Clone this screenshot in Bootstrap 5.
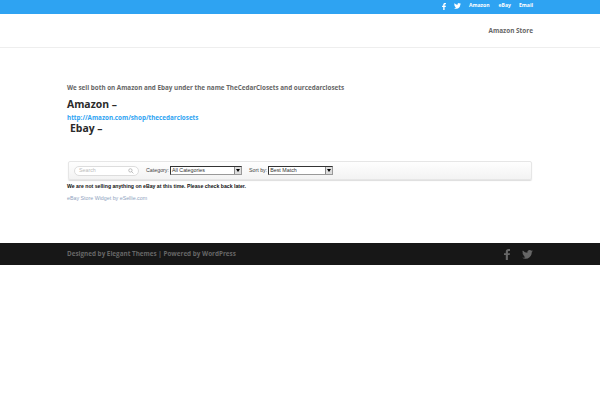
<!DOCTYPE html>
<html lang="en">
<head>
<meta charset="utf-8">
<title>Amazon Store</title>
<link rel="stylesheet" href="https://cdn.jsdelivr.net/npm/bootstrap@5.3.0/dist/css/bootstrap.min.css">
<style>
html,body{height:400px;overflow:hidden;}
body{font-family:"Open Sans",sans-serif;background:#fff;color:#666;}
.wrap-main{width:466px;margin-left:67px;}
.top-strip{height:14px;background:#2ea3f2;}
.top-strip a,.site-head a{text-decoration:none;font-weight:700;}
.top-links{font-size:5.1px;gap:8px;height:12px;}
.top-links a{color:#fff;}
.top-links .amz-link{margin-right:1px;}
.site-head{height:34px;border-bottom:1px solid #eee;font-size:6.4px;padding-top:12px;}
.site-head a{color:#666;line-height:9px;}
.intro{font-size:6.3px;font-weight:700;line-height:9px;margin:35px 0 0;color:#666;}
.shop-title{font-size:10.4px;font-weight:700;color:#2a2a2a;line-height:13px;margin:0;}
.title-one{margin-top:6px;}
.store-link{display:block;font-size:6.3px;font-weight:700;color:#2ea3f2;line-height:8px;margin-top:3px;text-decoration:none;}
.title-two{padding-left:3px;line-height:12px;margin-top:0;}
.ebay-bar{height:19px;margin:27px 1px 0 1px;background:linear-gradient(#fefefe,#f3f3f3);border:1px solid #e6e6e6;border-radius:2px;box-shadow:0 1px 1px #ddd;padding-left:5px;font-family:"Liberation Sans",sans-serif;font-size:5.3px;color:#444;}
.search-pill{width:65px;height:10px;border:1px solid #ddd;border-radius:5px;background:#fff;color:#bbb;padding:0 4px;margin-right:7px;}
.fake-select{height:9px;border:1px solid #333;border-right-color:#999;border-bottom-color:#999;background:#fff;color:#333;padding-left:1px;margin-left:1px;line-height:7px;position:relative;}
.fake-select.cat{width:72px;margin-right:7px;}
.fake-select.sort{width:65px;}
.sel-arrow{position:absolute;right:0;top:0;width:7px;height:7px;background:#ddd;border-left:1px solid #888;}
.sel-arrow::after{content:"";position:absolute;left:1px;top:2px;border:2px solid transparent;border-top:3px solid #000;border-bottom:0;}
.notice{font-family:"Liberation Sans",sans-serif;font-size:5.17px;font-weight:700;color:#111;line-height:7px;margin:3px 0 0;}
.credit{font-family:"Liberation Sans",sans-serif;font-size:5.3px;color:#8fa3c0;line-height:7px;margin:5px 0 0;}
.foot-strip{height:22px;margin-top:41px;background:#171717;}
.foot-strip span{font-size:6.33px;font-weight:700;color:#666;}
.foot-icons{gap:12px;}
.foot-icons svg{display:block;}
</style>
</head>
<body>
<div class="top-strip">
  <div class="wrap-main d-flex justify-content-end align-items-center top-links">
    <a href="#" aria-label="Facebook"><svg width="4" height="7" viewBox="0 0 10 18" class="d-block"><path fill="#fff" d="M3 18V10H0V7h3V4.500C3 1.500 4.800 0 7.400 0H10v3H8.300C7 3 6.500 3.600 6.500 4.700V7H10l-.5 3h-3v8z"/></svg></a>
    <a href="#" aria-label="Twitter"><svg width="7" height="6" viewBox="0 0 24 20" class="d-block"><path fill="#fff" d="M24 2.400c-.9.400-1.800.7-2.800.8 1-.6 1.800-1.600 2.200-2.700-1 .6-2 1-3.100 1.200A4.900 4.900 0 0 0 11.900 6.200 14 14 0 0 1 1.700.9a4.900 4.900 0 0 0 1.500 6.600c-.8 0-1.600-.2-2.200-.6 0 2.400 1.700 4.400 3.900 4.900-.7.200-1.500.2-2.200.1.600 2 2.400 3.400 4.600 3.400A9.900 9.900 0 0 1 0 17.300 14 14 0 0 0 7.500 19.500c9.100 0 14.300-7.700 14-14.600 1-.7 1.800-1.600 2.500-2.500z"/></svg></a>
    <a href="#" class="amz-link">Amazon</a>
    <a href="#">eBay</a>
    <a href="#">Email</a>
  </div>
</div>
<header class="site-head">
  <div class="wrap-main d-flex justify-content-end"><a href="#">Amazon Store</a></div>
</header>
<main class="wrap-main">
  <p class="intro">We sell both on Amazon and Ebay under the name TheCedarClosets and ourcedarclosets</p>
  <h2 class="shop-title title-one">Amazon –</h2>
  <a class="store-link" href="#">http://Amazon.com/shop/thecedarclosets</a>
  <h2 class="shop-title title-two">Ebay –</h2>
  <div class="ebay-bar d-flex align-items-center">
    <div class="search-pill d-flex align-items-center justify-content-between"><span>Search</span><svg width="6" height="6" viewBox="0 0 10 10"><circle cx="4" cy="4" r="2.800" fill="none" stroke="#999"/><path d="M6 6l3 3" stroke="#999"/></svg></div>
    <span>Category:</span><div class="fake-select cat">All Categories<i class="sel-arrow"></i></div>
    <span>Sort by:</span><div class="fake-select sort">Best Match<i class="sel-arrow"></i></div>
  </div>
  <p class="notice">We are not selling anything on eBay at this time. Please check back later.</p>
  <p class="credit">eBay Store Widget by eSellie.com</p>
</main>
<footer class="foot-strip">
  <div class="wrap-main d-flex justify-content-between align-items-center h-100">
    <span>Designed by Elegant Themes | Powered by WordPress</span>
    <div class="foot-icons d-flex align-items-center">
      <svg width="6" height="11" viewBox="0 0 10 18"><path fill="#666" d="M3 18V10H0V7h3V4.500C3 1.500 4.800 0 7.400 0H10v3H8.300C7 3 6.500 3.600 6.500 4.700V7H10l-.5 3h-3v8z"/></svg>
      <svg width="11" height="9" viewBox="0 0 24 20"><path fill="#666" d="M24 2.400c-.9.400-1.800.7-2.800.8 1-.6 1.800-1.600 2.200-2.700-1 .6-2 1-3.100 1.200A4.900 4.900 0 0 0 11.900 6.200 14 14 0 0 1 1.700.9a4.900 4.900 0 0 0 1.500 6.600c-.8 0-1.600-.2-2.200-.6 0 2.400 1.700 4.400 3.900 4.900-.7.200-1.500.2-2.200.1.600 2 2.400 3.400 4.600 3.400A9.900 9.900 0 0 1 0 17.300 14 14 0 0 0 7.500 19.500c9.100 0 14.300-7.700 14-14.600 1-.7 1.800-1.600 2.500-2.500z"/></svg>
    </div>
  </div>
</footer>
<script src="https://cdn.jsdelivr.net/npm/bootstrap@5.3.0/dist/js/bootstrap.bundle.min.js"></script>
</body>
</html>
